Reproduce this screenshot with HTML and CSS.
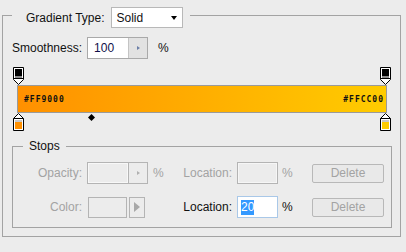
FILE: index.html
```html
<!DOCTYPE html>
<html lang="en">
<head>
  <meta charset="UTF-8">
  <title>Gradient Editor</title>
  <link rel="stylesheet" href="styles.css">
</head>
<body>
  <div class="panel">
    <div class="panel-title">
      <span>Gradient Type:</span>
      <div class="select"><span>Solid</span><i class="caret"></i></div>
    </div>

    <div class="smooth">
      <span>Smoothness:</span>
      <div class="spin">
        <span class="spin-value">100</span>
        <span class="spin-btn"><i class="tri"></i></span>
      </div>
      <span class="unit">%</span>
    </div>

    <!-- gradient bar with stops -->
    <div class="gradient">
      <div class="stop-row">
        <svg class="marker" style="left: 10px" width="12" height="18" viewBox="0 0 12 18">
          <path d="M0.5 0.5H10.5V12.5L5.5 17.5L0.5 12.5Z" fill="#fff" stroke="#000"/>
          <path d="M0.5 11.5H10.5" stroke="#000"/>
          <rect x="2" y="2" width="7" height="7" fill="#000"/>
          <rect x="2" y="9" width="7" height="2" fill="#8c8c8c"/>
        </svg>
        <svg class="marker" style="left: 377px" width="12" height="18" viewBox="0 0 12 18">
          <path d="M0.5 0.5H10.5V12.5L5.5 17.5L0.5 12.5Z" fill="#fff" stroke="#000"/>
          <path d="M0.5 11.5H10.5" stroke="#000"/>
          <rect x="2" y="2" width="7" height="7" fill="#000"/>
          <rect x="2" y="9" width="7" height="2" fill="#8c8c8c"/>
        </svg>
      </div>
      <div class="bar">
        <span>#FF9000</span>
        <span>#FFCC00</span>
      </div>
      <div class="stop-row">
        <svg class="marker" style="left: 10px" width="12" height="18" viewBox="0 0 12 18">
          <path d="M5.5 0.5L10.5 5.5V17.5H0.5V5.5Z" fill="#fff" stroke="#000"/>
          <path d="M0.5 5.5H10.5" stroke="#000"/>
          <rect x="2" y="7" width="7" height="2" fill="#c8c8c8"/>
          <rect x="2" y="9" width="7" height="7" fill="#ff9000"/>
        </svg>
        <svg class="diamond" width="7" height="7" viewBox="0 0 7 7">
          <path d="M3.5 0L7 3.5L3.5 7L0 3.5Z" fill="#000"/>
        </svg>
        <svg class="marker" style="left: 377px" width="12" height="18" viewBox="0 0 12 18">
          <path d="M5.5 0.5L10.5 5.5V17.5H0.5V5.5Z" fill="#fff" stroke="#000"/>
          <path d="M0.5 5.5H10.5" stroke="#000"/>
          <rect x="2" y="7" width="7" height="2" fill="#c8c8c8"/>
          <rect x="2" y="9" width="7" height="7" fill="#ffcc00"/>
        </svg>
      </div>
    </div>

    <!-- stops -->
    <div class="group">
      <div class="group-title">Stops</div>
      <div class="fields">
        <span class="label off">Opacity:</span>
        <div class="pair">
          <div class="spin off">
            <span class="spin-value"></span>
            <span class="spin-btn"><i class="tri"></i></span>
          </div>
          <span class="unit off">%</span>
        </div>
        <span class="label off">Location:</span>
        <div class="pair">
          <div class="loc off"></div>
          <span class="unit off">%</span>
        </div>
        <button class="btn">Delete</button>

        <span class="label off">Color:</span>
        <div class="pair">
          <div class="swatch"></div>
          <div class="swatch-btn"><i class="big-tri"></i></div>
        </div>
        <span class="label">Location:</span>
        <div class="pair">
          <div class="loc focus"><span class="sel">20</span></div>
          <span class="unit">%</span>
        </div>
        <button class="btn">Delete</button>
      </div>
    </div>
  </div>
</body>
</html>
```

FILE: styles.css
```css
body {
  margin: 0;
  background: #ececec;
  font-family: "Liberation Sans", Arial, sans-serif;
  font-size: 12px;
  color: #111;
}

.panel {
  margin: 15px 0 0 2px;
  width: 399px;
  height: 222px;
  box-sizing: border-box;
  border: 1px solid #a3a3a3;
}

.panel-title {
  display: flex;
  align-items: center;
  gap: 6px;
  width: max-content;
  margin: -9px 0 0 9px;
  padding: 0 7px 0 14px;
  background: #ececec;
}

.select {
  width: 72px;
  height: 21px;
  box-sizing: border-box;
  border: 1px solid #b8b8b8;
  background: #fff;
  display: flex;
  align-items: center;
  justify-content: space-between;
  padding: 0 5px;
}
.caret {
  border-top: 4px solid #000;
  border-left: 3.5px solid transparent;
  border-right: 3.5px solid transparent;
}

.smooth {
  display: flex;
  align-items: center;
  gap: 5px;
  margin-top: 9px;
  padding-left: 9px;
}

.spin {
  width: 61px;
  height: 22px;
  box-sizing: border-box;
  border: 1px solid #a9a9a9;
  display: flex;
}
.spin-value {
  flex: 1;
  background: #fff;
  padding-left: 6px;
  line-height: 20px;
  color: #10104a;
}
.spin-btn {
  width: 18px;
  background: #e2e2e2;
  border-left: 1px solid #c4c4c4;
  display: flex;
  align-items: center;
  justify-content: center;
}
.tri {
  border-left: 3px solid #6b7fa8;
  border-top: 2.5px solid transparent;
  border-bottom: 2.5px solid transparent;
}

.gradient {
  margin-top: 8px;
}
.stop-row {
  position: relative;
  height: 18px;
}
.marker {
  position: absolute;
  top: 0;
}
.diamond {
  position: absolute;
  left: 85px;
  top: 1px;
}

.bar {
  margin-left: 14px;
  width: 370px;
  height: 28px;
  box-sizing: border-box;
  border: 1px solid #9a9a9a;
  background: linear-gradient(to right, #ff9000, #ffcc00);
  display: flex;
  align-items: center;
  justify-content: space-between;
  padding: 0 2px 0 6px;
  font-family: "DejaVu Sans Mono", monospace;
  font-weight: bold;
  font-size: 8px;
  letter-spacing: 1px;
  color: #111;
}

.group {
  margin: 15px 0 0 9px;
  width: 380px;
  height: 82px;
  box-sizing: border-box;
  border: 1px solid #a3a3a3;
}
.group-title {
  width: max-content;
  margin: -8px 0 0 10px;
  padding: 0 6px;
  line-height: 15px;
  background: #ececec;
}

.fields {
  display: grid;
  grid-template-columns: 74px 96px 54px 75px 72px;
  grid-auto-rows: 22px;
  row-gap: 12px;
  margin-top: 8px;
  align-items: center;
}
.label {
  text-align: right;
  padding-right: 5px;
}
.off {
  color: #a3a3a3;
}
.pair {
  display: flex;
  align-items: center;
  height: 22px;
}
.unit {
  margin-left: 5px;
}
.spin.off {
  border-color: #b4b4b4;
}
.spin.off .spin-value {
  background: #ececec;
  box-shadow: inset 0 0 0 1px #f8f8f8;
}
.spin.off .spin-btn {
  background: #ececec;
  border-left-color: #b4b4b4;
}
.spin.off .tri {
  border-left-color: #b0b0b0;
}

.loc {
  width: 41px;
  height: 22px;
  box-sizing: border-box;
  border: 1px solid #b4b4b4;
  display: flex;
  align-items: center;
  padding-left: 3px;
}
.loc + .unit {
  margin-left: 4px;
}
.loc.off {
  background: #ececec;
  box-shadow: inset 0 0 0 1px #f6f6f6;
}
.loc.focus {
  border-color: #a9c8e8;
  background: #fff;
}
.sel {
  background: #3399ff;
  color: #fff;
  line-height: 15px;
}

.swatch {
  margin-left: 1px;
  width: 39px;
  height: 21px;
  box-sizing: border-box;
  border: 1px solid #b4b4b4;
}
.swatch-btn {
  margin-left: 2px;
  width: 16px;
  height: 21px;
  box-sizing: border-box;
  border: 1px solid #b4b4b4;
  display: flex;
  align-items: center;
  justify-content: center;
}
.big-tri {
  border-left: 6px solid #a8a8a8;
  border-top: 5px solid transparent;
  border-bottom: 5px solid transparent;
}

.btn {
  width: 72px;
  height: 19px;
  padding: 0;
  border: 1px solid #b8b8b8;
  border-radius: 2px;
  background: #e9e9e9;
  font-family: inherit;
  font-size: 12px;
  color: #a3a3a3;
}
```
